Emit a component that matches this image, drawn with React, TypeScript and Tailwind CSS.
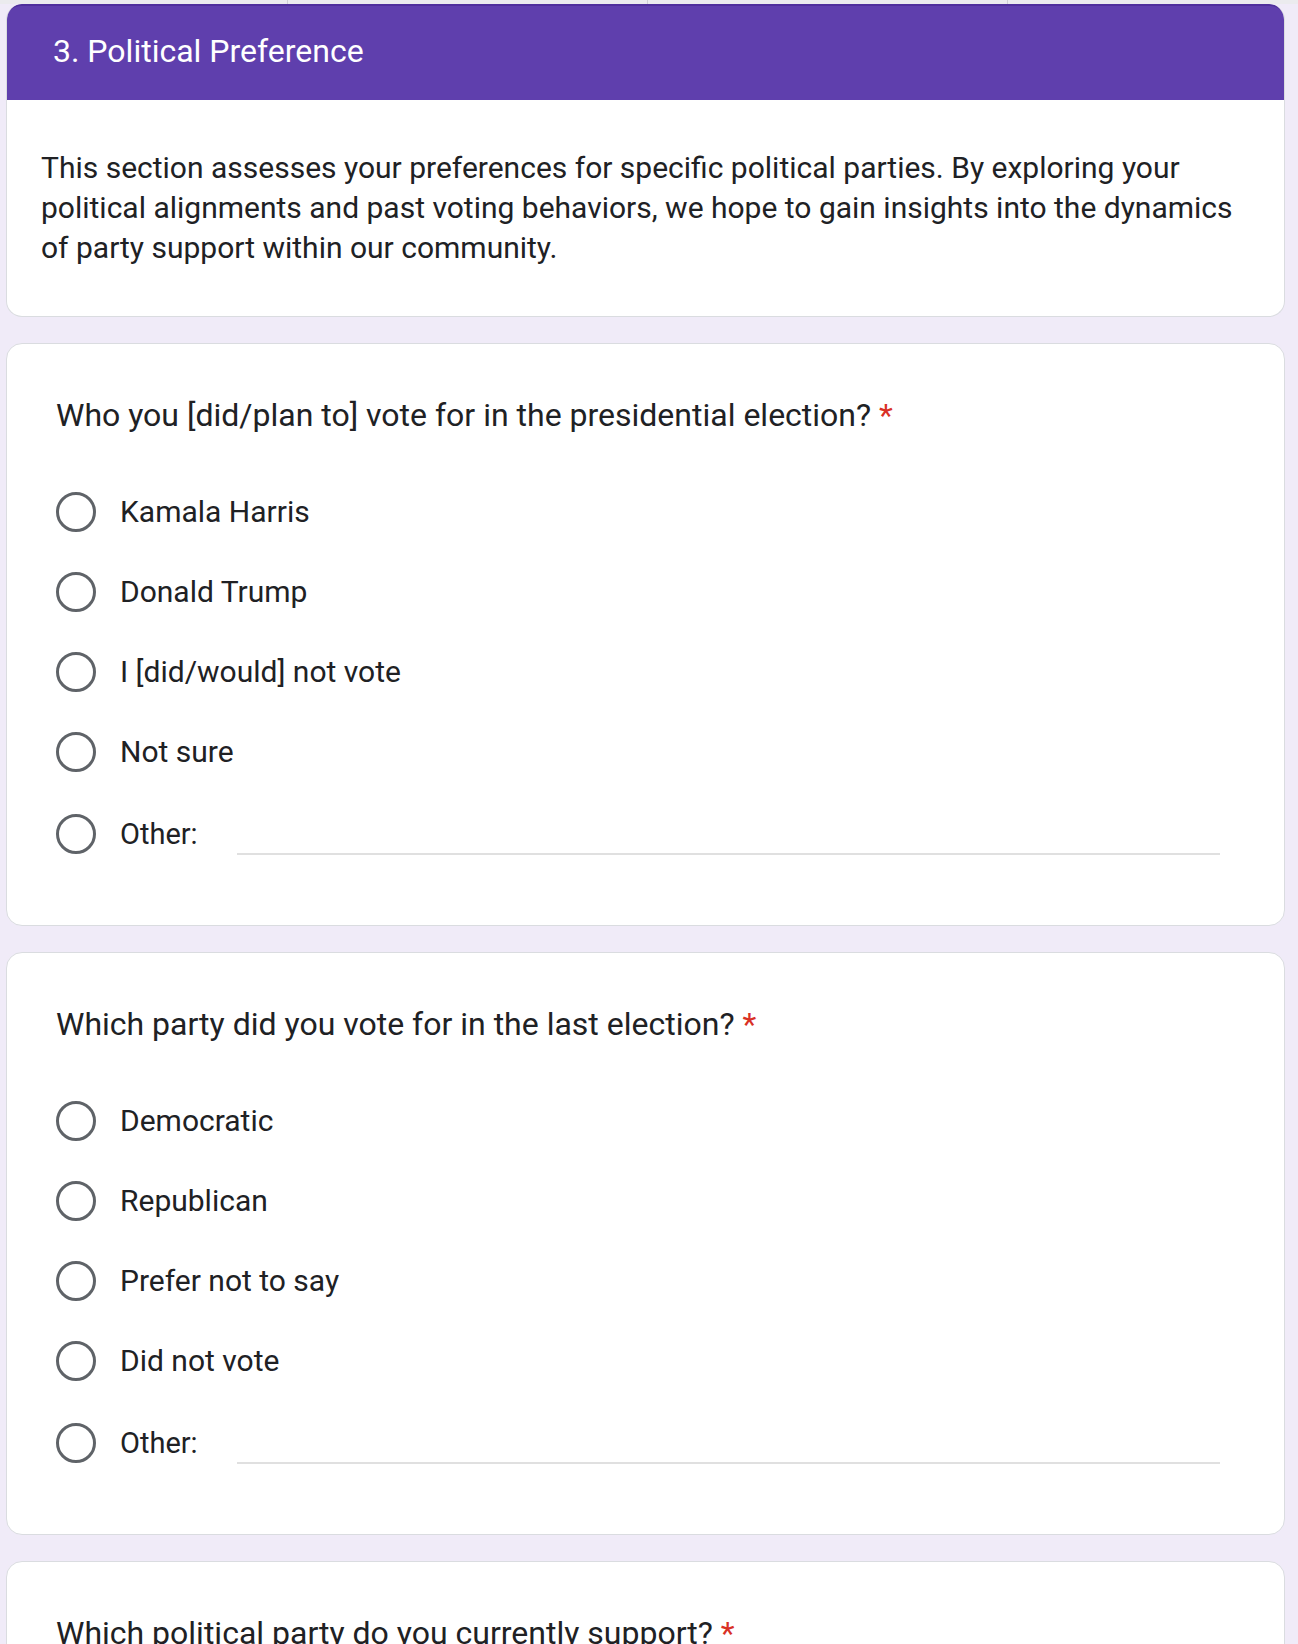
import React from "react";

function Radio() {
  return (
    <span className="box-border block h-[40px] w-[40px] shrink-0 rounded-full border-[3px] border-[#5f6368]" />
  );
}

function Option({ label }: { label: string }) {
  return (
    <div className="flex h-[80px] items-center">
      <Radio />
      <span className="ml-[24px] text-[30px] leading-[40px] text-[#202124]">{label}</span>
    </div>
  );
}

function OtherOption() {
  return (
    <div className="flex h-[84px] items-center">
      <Radio />
      <span className="ml-[24px] text-[29px] leading-[40px] text-[#202124]">Other:</span>
      <div className="ml-[39px] mr-[15px] h-[40px] flex-1 translate-y-[1px] border-b-2 border-[#e0e0e0]" />
    </div>
  );
}

function QuestionCard({ title, options }: { title: string; options: string[] }) {
  return (
    <div className="rounded-[16px] border border-[#dadce0] bg-white pb-[49px] pl-[49px] pr-[49px] pt-[47px]">
      <div className="text-[32px] leading-[48px] text-[#202124]">
        {title} <span className="text-[#d93025]">*</span>
      </div>
      <div className="mt-[33px] flex flex-col">
        {options.map((o) => (
          <Option key={o} label={o} />
        ))}
        <OtherOption />
      </div>
    </div>
  );
}

export default function App() {
  return (
    <div className="min-h-[1700px] bg-[#f0ebf8] font-[Roboto,sans-serif]">
      <div className="flex h-[4px] bg-[#ebebee]">
        <div className="w-[288px] border-r border-[#cfcfd4]" />
        <div className="w-[360px] border-r border-[#cfcfd4]" />
        <div className="w-[360px] border-r border-[#cfcfd4]" />
        <div className="flex-1" />
      </div>
      <div className="ml-[6px] flex w-[1279px] flex-col gap-[26px]">
        <div className="overflow-hidden rounded-[16px] border border-t-0 border-[#dadce0] bg-white">
          <div className="box-border h-[96px] rounded-t-[14px] border-t-2 border-[#4f2f9c] bg-[#5f3fad] pl-[46px] pt-[21px] text-[32px] leading-[48px] text-white">
            3. Political Preference
          </div>
          <div className="pb-[48px] pl-[34px] pr-[20px] pt-[48px] text-[30px] leading-[40px] text-[#202124]">
            This section assesses your preferences for specific political parties. By exploring your
            <br />
            political alignments and past voting behaviors, we hope to gain insights into the dynamics
            <br />
            of party support within our community.
          </div>
        </div>
        <QuestionCard
          title="Who you [did/plan to] vote for in the presidential election?"
          options={["Kamala Harris", "Donald Trump", "I [did/would] not vote", "Not sure"]}
        />
        <QuestionCard
          title="Which party did you vote for in the last election?"
          options={["Democratic", "Republican", "Prefer not to say", "Did not vote"]}
        />
        <QuestionCard
          title="Which political party do you currently support?"
          options={["Democratic Party", "Republican Party", "Independent", "No party", "Prefer not to say"]}
        />
      </div>
    </div>
  );
}
